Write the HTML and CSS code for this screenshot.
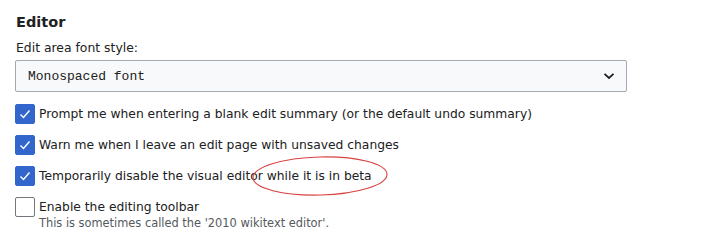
FILE: index.html
```html
<!DOCTYPE html>
<html>
<head>
<meta charset="utf-8">
<link rel="stylesheet" href="styles.css">
</head>
<body>
<div class="panel">
  <h2 class="heading">Editor</h2>
  <div class="field">
    <label class="field-label">Edit area font style:</label>
    <div class="select">
      <span class="select-value">Monospaced font</span>
      <svg class="chevron" width="12" height="8" viewBox="0 0 12 8"><path d="M1.5 1.8 L6 6 L10.5 1.8" fill="none" stroke="#202122" stroke-width="1.8"/></svg>
    </div>
  </div>
  <div class="options">
    <div class="option">
      <span class="box checked"><svg width="20" height="20" viewBox="0 0 20 20"><path d="M5.5 10.5 L8.5 13.5 L14.5 6.5" fill="none" stroke="#fff" stroke-width="1.4"/></svg></span>
      <span class="opt-text">Prompt me when entering a blank edit summary (or the default undo summary)</span>
    </div>
    <div class="option">
      <span class="box checked"><svg width="20" height="20" viewBox="0 0 20 20"><path d="M5.5 10.5 L8.5 13.5 L14.5 6.5" fill="none" stroke="#fff" stroke-width="1.4"/></svg></span>
      <span class="opt-text">Warn me when I leave an edit page with unsaved changes</span>
    </div>
    <div class="option">
      <span class="box checked"><svg width="20" height="20" viewBox="0 0 20 20"><path d="M5.5 10.5 L8.5 13.5 L14.5 6.5" fill="none" stroke="#fff" stroke-width="1.4"/></svg></span>
      <span class="opt-text">Temporarily disable the visual editor while it is in beta</span>
    </div>
    <div class="option">
      <span class="box"></span>
      <div class="opt-body">
        <span class="opt-text">Enable the editing toolbar</span>
        <span class="hint">This is sometimes called the '2010 wikitext editor'.</span>
      </div>
    </div>
  </div>
  <svg class="annotation" width="140" height="42" viewBox="0 0 140 42"><ellipse cx="69" cy="20" rx="67" ry="19" fill="none" stroke="#d9413f" stroke-width="1.1" transform="rotate(-1.5 69 20)"/></svg>
</div>
</body>
</html>
```
FILE: styles.css
```css
html, body {
  margin: 0;
  padding: 0;
  background: #fff;
}
body {
  font-family: "DejaVu Sans", Verdana, sans-serif;
  color: #202122;
}
.panel {
  position: relative;
  padding: 12px 16px 0 15px;
  width: 612px;
}
.heading {
  margin: 0 0 0 1px;
  font-size: 14.5px;
  font-weight: bold;
  line-height: 20px;
}
.field {
  margin-top: 7px;
}
.field-label {
  display: block;
  font-size: 12.4px;
  line-height: 17px;
  margin-left: 1px;
}
.select {
  margin-top: 4px;
  box-sizing: border-box;
  height: 32px;
  border: 1px solid #a2a9b1;
  border-radius: 2px;
  background: #f8f9fa;
  display: flex;
  align-items: center;
  justify-content: space-between;
  padding: 0 11px 0 12px;
}
.select-value {
  font-family: "Liberation Mono", "Courier New", monospace;
  font-size: 13px;
}
.options {
  margin-top: 12px;
  display: flex;
  flex-direction: column;
  gap: 11px;
}
.option {
  display: flex;
  align-items: flex-start;
  gap: 4px;
}
.box {
  box-sizing: border-box;
  width: 20px;
  height: 20px;
  border: 1px solid #72777d;
  border-radius: 2px;
  flex: none;
  display: block;
}
.box.checked {
  background: #36c;
  border-color: #36c;
}
.box svg {
  display: block;
  margin: -1px;
}
.opt-body {
  display: flex;
  flex-direction: column;
}
.opt-text {
  font-size: 12.3px;
  line-height: 20px;
}
.hint {
  font-size: 11.4px;
  line-height: 13px;
  color: #54595d;
}
.annotation {
  position: absolute;
  left: 251px;
  top: 156px;
}
```
